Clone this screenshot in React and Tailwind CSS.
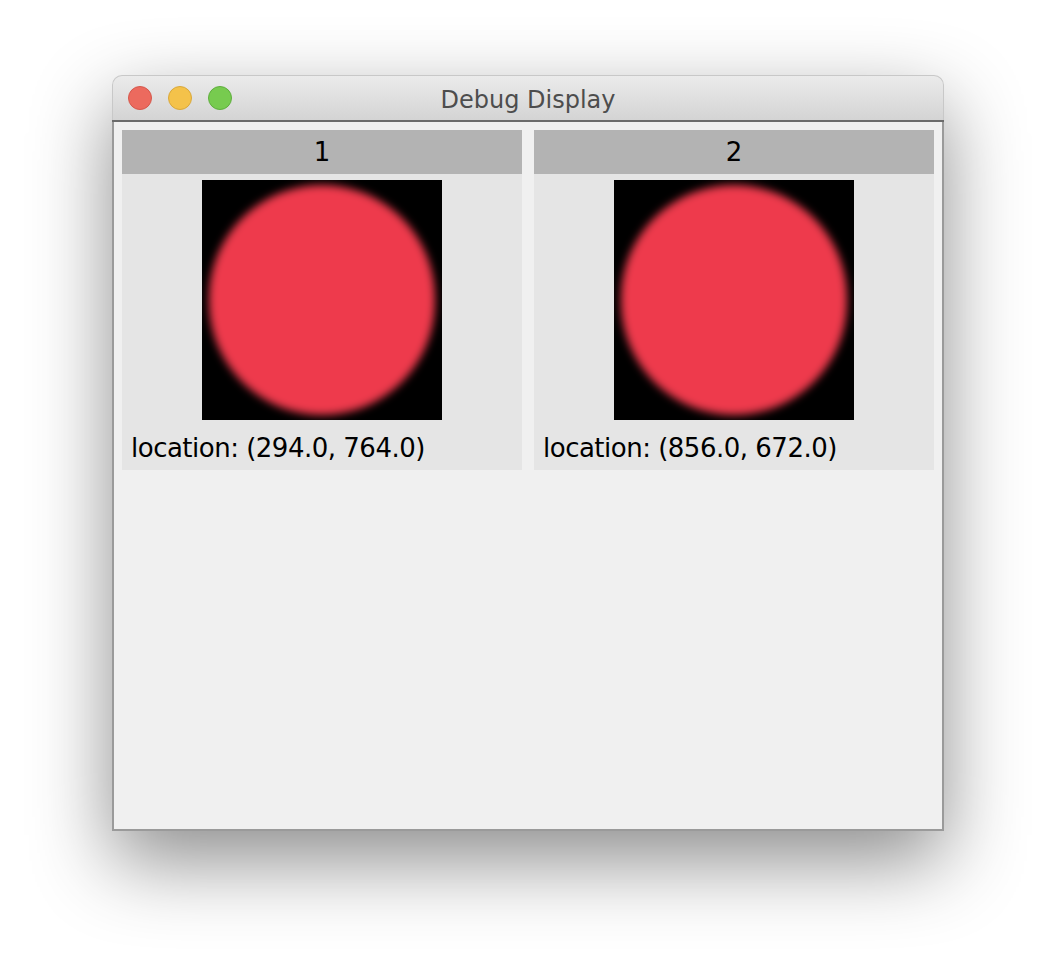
import React from "react";

function Tile({ n, loc }) {
  return (
    <div className="w-[400px] bg-[#e5e5e5] flex flex-col">
      <div className="h-[44px] bg-[#b3b3b3] flex items-center justify-center text-[26px] text-black">
        {n}
      </div>
      <div className="flex justify-center pt-[6px]">
        <div className="w-[240px] h-[240px] bg-black overflow-hidden flex items-center justify-center">
          <div className="w-[226px] h-[230px] rounded-full bg-[#ee3a4c] blur-[4px]" />
        </div>
      </div>
      <div className="h-[50px] pl-[9px] pt-[6px] flex items-center text-[26px] tracking-[-0.5px] text-black">
        {loc}
      </div>
    </div>
  );
}

export default function App() {
  return (
    <div
      className="w-[1056px] h-[980px] bg-white pt-[75px] pl-[112px]"
      style={{ fontFamily: '"Lucida Grande", "DejaVu Sans", sans-serif' }}
    >
      <div className="w-[832px] h-[756px] rounded-t-[10px] flex flex-col shadow-[0_30px_80px_rgba(0,0,0,0.45)] bg-[#f0f0f0]">
        <div className="h-[45px] rounded-t-[10px] bg-gradient-to-b from-[#ebebeb] to-[#d4d4d4] border-t border-x border-[#c8c8c8] flex items-center relative">
          <div className="flex gap-[16px] pl-[15px]">
            <div className="w-[24px] h-[24px] rounded-full bg-[#ec6a5e] border border-[#d5584c]" />
            <div className="w-[24px] h-[24px] rounded-full bg-[#f4c24a] border border-[#d9a83b]" />
            <div className="w-[24px] h-[24px] rounded-full bg-[#77cb4f] border border-[#5fae3e]" />
          </div>
          <div className="absolute inset-0 pt-[4px] flex items-center justify-center text-[24px] text-[#4d4d4d]">
            Debug Display
          </div>
        </div>
        <div className="h-[2px] bg-[#6b6b6b]" />
        <div className="flex-1 border-x-[2px] border-b-[2px] border-[#9a9a9a] bg-[#f0f0f0] flex gap-[12px] pt-[8px] pl-[8px] items-start">
          <Tile n="1" loc="location: (294.0, 764.0)" />
          <Tile n="2" loc="location: (856.0, 672.0)" />
        </div>
      </div>
    </div>
  );
}
